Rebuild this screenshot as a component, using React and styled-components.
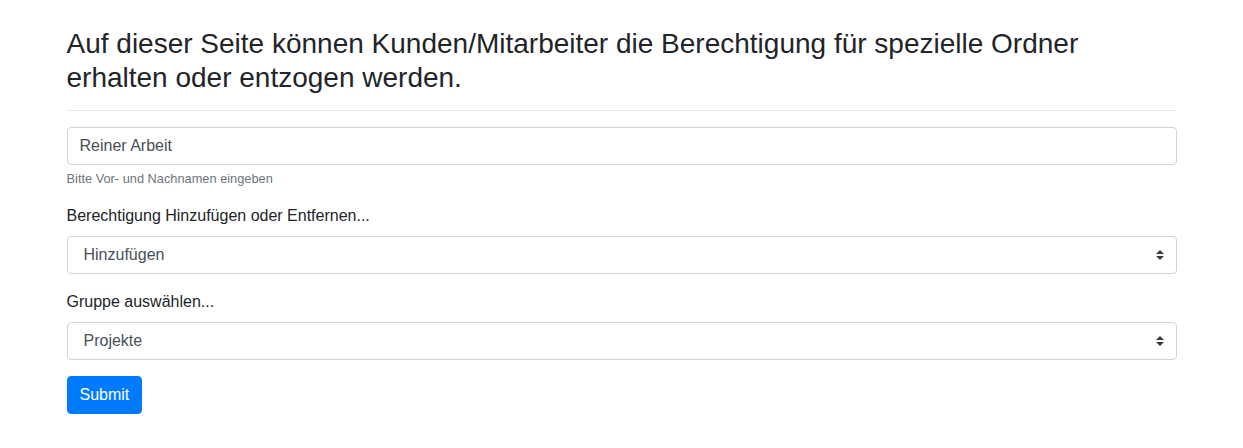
import React, { useState } from "react";
import styled, { createGlobalStyle } from "styled-components";

const Global = createGlobalStyle`
  html, body { margin: 0; padding: 0; background: #fff; }
  body {
    font-family: "Segoe UI", "Liberation Sans", Arial, sans-serif;
    font-size: 16px;
    line-height: 1.5;
    color: #212529;
  }
  *, *::before, *::after { box-sizing: border-box; }
`;

const Container = styled.div`
  width: 1140px;
  max-width: 100%;
  margin: 0 auto;
  padding: 27px 15px 0;
`;

const Title = styled.h3`
  margin: 0 0 8px;
  font-size: 28px;
  font-weight: 400;
  line-height: 1.2;
  color: #212529;
`;

const Rule = styled.hr`
  margin: 16px 0;
  border: 0;
  border-top: 1px solid rgba(0, 0, 0, 0.1);
`;

const Form = styled.form`
  display: flex;
  flex-direction: column;
`;

const Group = styled.div`
  display: flex;
  flex-direction: column;
  margin-bottom: 16px;
`;

const Label = styled.label`
  display: block;
  margin-bottom: 8px;
  font-size: 16px;
  line-height: 24px;
`;

const Input = styled.input`
  display: block;
  width: 100%;
  height: 38px;
  padding: 6px 12px;
  font-family: inherit;
  font-size: 16px;
  line-height: 1.5;
  color: #495057;
  background: #fff;
  border: 1px solid #ced4da;
  border-radius: 4px;
  outline: none;
`;

const Help = styled.small`
  display: block;
  margin-top: 4px;
  font-size: 12.8px;
  line-height: 1.5;
  color: #6c757d;
`;

const SelectWrap = styled.div`
  position: relative;
  width: 100%;
`;

const Select = styled.select`
  display: block;
  width: 100%;
  height: 38px;
  padding: 6px 28px 6px 16px;
  font-family: inherit;
  font-size: 16px;
  line-height: 1.5;
  color: #495057;
  background: #fff;
  border: 1px solid #ced4da;
  border-radius: 4px;
  appearance: none;
  -webkit-appearance: none;
  outline: none;
`;

const Arrow = styled.svg`
  position: absolute;
  right: 13px;
  top: 50%;
  width: 8px;
  height: 10px;
  margin-top: -5px;
  pointer-events: none;
`;

const Button = styled.button`
  align-self: flex-start;
  display: inline-block;
  height: 38px;
  padding: 6px 12px;
  font-family: inherit;
  font-size: 16px;
  line-height: 1.5;
  color: #fff;
  background: #007bff;
  border: 1px solid #007bff;
  border-radius: 4px;
  cursor: pointer;
`;

function CustomSelect({ value, options, onChange }) {
  return (
    <SelectWrap>
      <Select value={value} onChange={(e) => onChange(e.target.value)}>
        {options.map((o) => (
          <option key={o}>{o}</option>
        ))}
      </Select>
      <Arrow viewBox="0 0 4 5">
        <path fill="#343a40" d="M2 0L0 2h4zm0 5L0 3h4z" />
      </Arrow>
    </SelectWrap>
  );
}

export default function App() {
  const [name, setName] = useState("Reiner Arbeit");
  const [mode, setMode] = useState("Hinzufügen");
  const [group, setGroup] = useState("Projekte");
  return (
    <>
      <Global />
      <Container>
        <Title>
          Auf dieser Seite können Kunden/Mitarbeiter die Berechtigung für spezielle Ordner erhalten oder entzogen werden.
        </Title>
        <Rule />
        <Form onSubmit={(e) => e.preventDefault()}>
          <Group>
            <Input value={name} onChange={(e) => setName(e.target.value)} />
            <Help>Bitte Vor- und Nachnamen eingeben</Help>
          </Group>
          <Group>
            <Label>Berechtigung Hinzufügen oder Entfernen...</Label>
            <CustomSelect value={mode} onChange={setMode} options={["Hinzufügen", "Entfernen"]} />
          </Group>
          <Group>
            <Label>Gruppe auswählen...</Label>
            <CustomSelect value={group} onChange={setGroup} options={["Projekte", "Verwaltung", "Technik"]} />
          </Group>
          <Button type="submit">Submit</Button>
        </Form>
      </Container>
    </>
  );
}
